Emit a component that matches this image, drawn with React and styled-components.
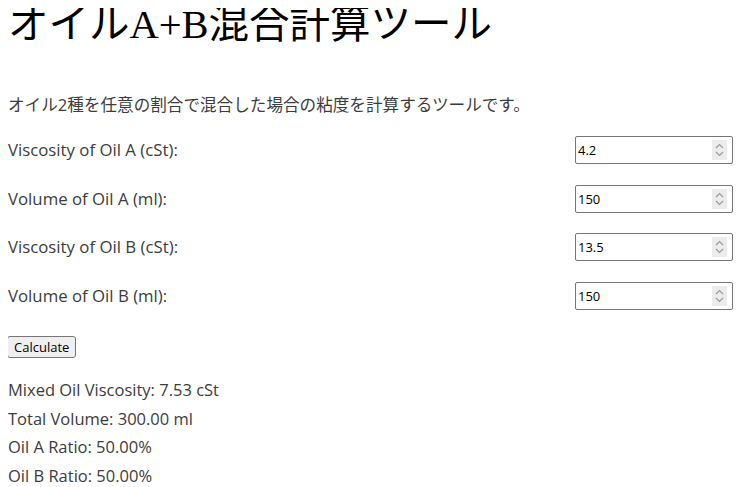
import React, { useState } from "react";
import styled, { createGlobalStyle } from "styled-components";

const GlobalStyle = createGlobalStyle`
  body {
    margin: 8px;
    background: #fff;
    color: #3c3c3c;
    font-family: "Open Sans", "Noto Sans CJK JP", sans-serif;
    font-size: 16.8px;
  }
`;

const Title = styled.h1`
  margin: 0;
  font-family: "Liberation Serif", "Noto Sans CJK JP", serif;
  font-weight: 400;
  font-size: 40.5px;
  line-height: 34px;
  color: #000;
`;

const Description = styled.p`
  margin: 51px 0 19px;
  line-height: 24px;
  font-size: 16.6px;
`;

const Row = styled.div`
  display: flex;
  justify-content: space-between;
  align-items: center;
  height: 28px;
  margin-bottom: 20.5px;
  padding-right: 1px;
`;

const Label = styled.label`
  line-height: 24px;
`;

const InputWrap = styled.div`
  position: relative;
  width: 158px;
  height: 28px;
`;

const Input = styled.input`
  box-sizing: border-box;
  width: 100%;
  height: 100%;
  border: 1px solid #767676;
  border-radius: 2px;
  padding: 0 24px 0 2px;
  font-family: "Open Sans", sans-serif;
  font-size: 13px;
  color: #000;
  background: #fff;
`;

const Spinner = styled.span`
  position: absolute;
  right: 6px;
  top: 4px;
  width: 15px;
  height: 20px;
  background: #ececec;
  display: flex;
  align-items: center;
  justify-content: center;
  pointer-events: none;
`;

const Button = styled.button`
  margin: 6px 0 18px -1px;
  padding: 1px 6px;
  height: 22px;
  font-family: "Open Sans", sans-serif;
  font-size: 13px;
  color: #000;
  background: #efefef;
  border: 1px solid #767676;
  border-radius: 3px;
`;

const Result = styled.p`
  margin: 0;
  line-height: 28.7px;
  font-size: 16.5px;
`;

const SpinIcon = () => (
  <svg width="9" height="14" viewBox="0 0 9 14" fill="none" stroke="#9a9a9a" strokeWidth="1.2">
    <path d="M1 5 L4.5 1.5 L8 5" />
    <path d="M1 9 L4.5 12.5 L8 9" />
  </svg>
);

const fields = [
  { id: "va", label: "Viscosity of Oil A (cSt):", value: "4.2" },
  { id: "qa", label: "Volume of Oil A (ml):", value: "150" },
  { id: "vb", label: "Viscosity of Oil B (cSt):", value: "13.5" },
  { id: "qb", label: "Volume of Oil B (ml):", value: "150" },
];

export default function App() {
  const [values, setValues] = useState(
    Object.fromEntries(fields.map((f) => [f.id, f.value]))
  );

  return (
    <>
      <GlobalStyle />
      <Title>オイルA+B混合計算ツール</Title>
      <Description>オイル2種を任意の割合で混合した場合の粘度を計算するツールです。</Description>
      {fields.map((f) => (
        <Row key={f.id}>
          <Label htmlFor={f.id}>{f.label}</Label>
          <InputWrap>
            <Input
              id={f.id}
              type="text"
              value={values[f.id]}
              onChange={(e) => setValues({ ...values, [f.id]: e.target.value })}
            />
            <Spinner>
              <SpinIcon />
            </Spinner>
          </InputWrap>
        </Row>
      ))}
      <Button>Calculate</Button>
      <Result>Mixed Oil Viscosity: 7.53 cSt</Result>
      <Result>Total Volume: 300.00 ml</Result>
      <Result>Oil A Ratio: 50.00%</Result>
      <Result>Oil B Ratio: 50.00%</Result>
    </>
  );
}
